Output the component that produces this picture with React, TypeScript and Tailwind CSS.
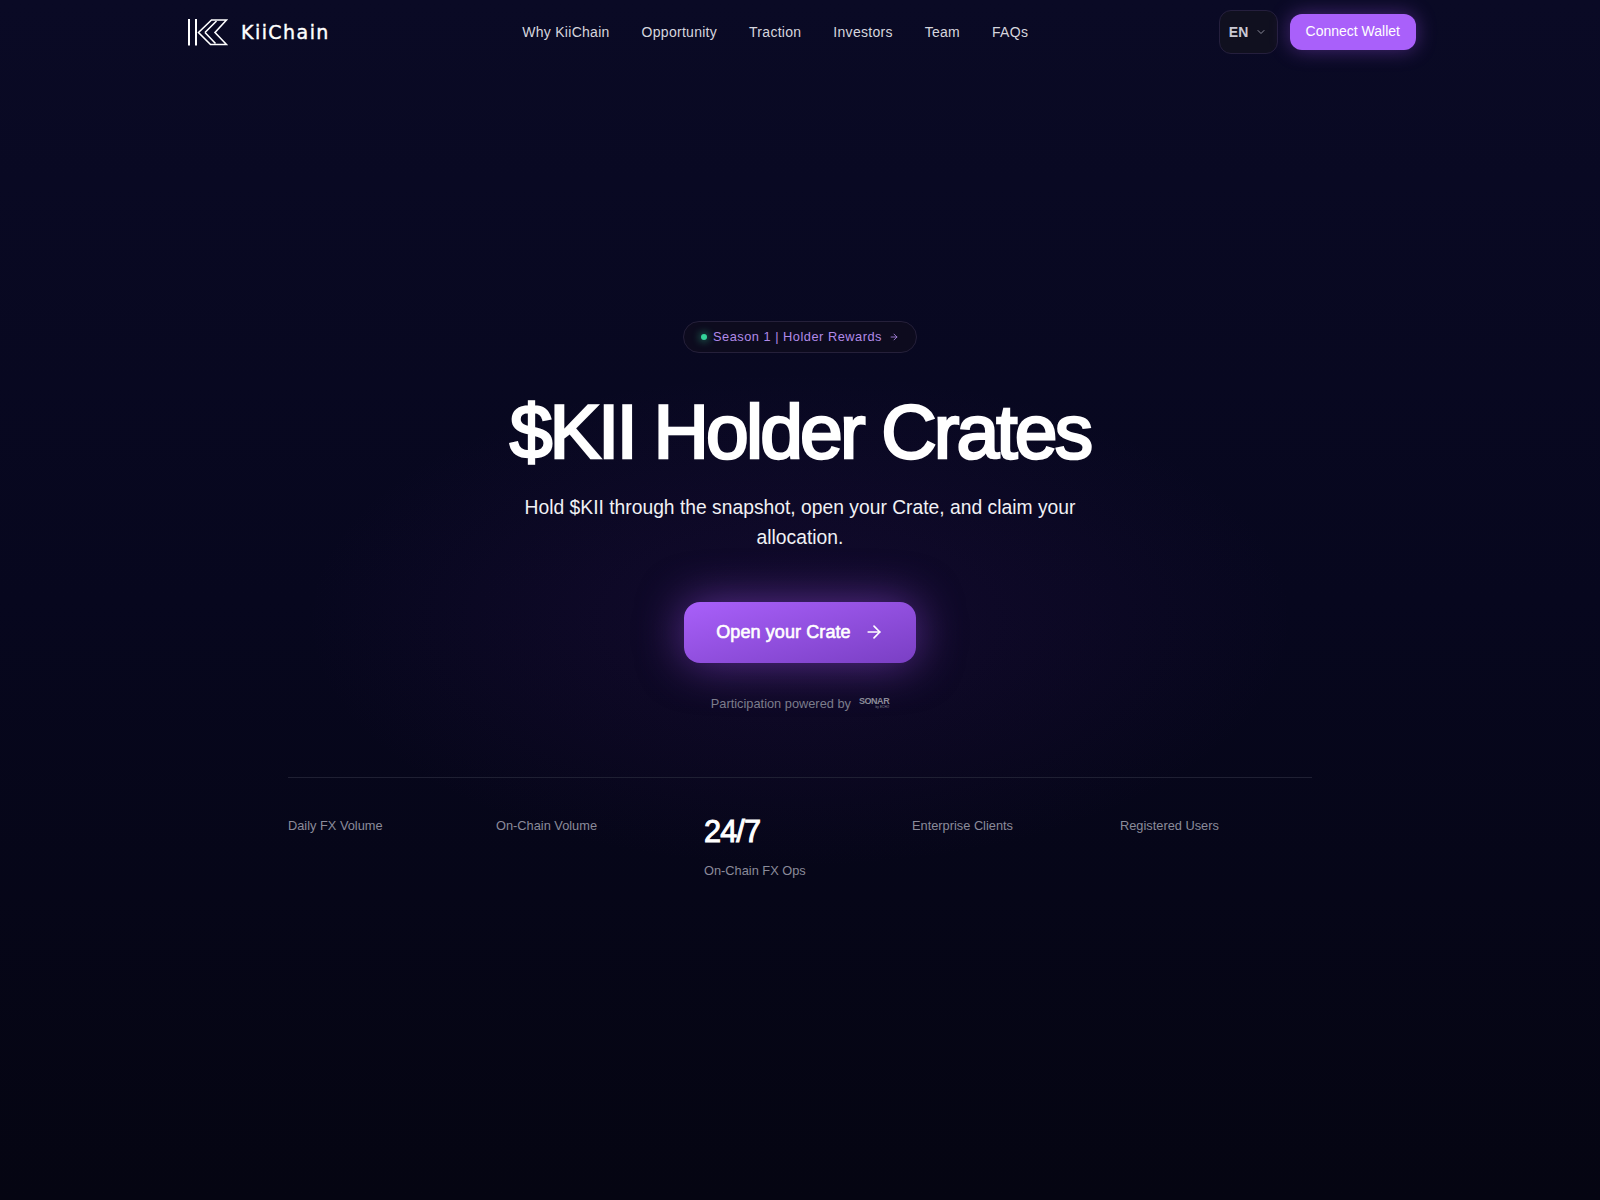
import { ArrowRight, ChevronDown } from "lucide-react";

const links = ["Why KiiChain", "Opportunity", "Traction", "Investors", "Team", "FAQs"];

function Stat({ label, value }: { label: string; value?: string }) {
  return (
    <div>
      {value ? (
        <div className="text-[30.7px] leading-[44px] font-normal tracking-[-0.03em] text-white mb-[7px] [-webkit-text-stroke:1px_white]">{value}</div>
      ) : null}
      <div className={`text-[12.8px] leading-[20px] text-[#8b8b9a] ${value ? "" : "mt-[6px]"}`}>{label}</div>
    </div>
  );
}

export default function App() {
  return (
    <div
      className="relative w-full h-[1200px] overflow-hidden bg-gradient-to-b from-[#0a0a25] via-[#07071e] to-[#050512] text-white"
      style={{ fontFamily: '"Liberation Sans", Arial, sans-serif' }}
    >
      <div className="absolute left-[300px] top-[370px] w-[1000px] h-[500px] bg-[radial-gradient(ellipse_at_center,rgba(88,28,135,0.14),transparent_70%)]" />
      <header className="relative h-[64px] max-w-7xl mx-auto px-6 flex items-center justify-between">
        <div className="flex items-center gap-[13px] pl-[4px]">
          <svg width="40" height="27" viewBox="0 0 40 27" fill="none" stroke="white" strokeWidth="2">
            <path d="M1 0v26.500M8 0v26.500" />
            <path d="M10.500 13.500 23.500 1H38.500L27 13.500 38.500 25.500H22.500L10.500 13.500Z" strokeWidth="1.600" />
            <path d="M17 13.500 28.500 2M17 13.500 27.500 24.500" strokeWidth="1.600" />
          </svg>
          <span className="text-[19px] font-normal tracking-[0.076em] text-white [-webkit-text-stroke:0.4px_white]" style={{ fontFamily: '"DejaVu Sans", sans-serif' }}>KiiChain</span>
        </div>
        <nav className="flex items-center gap-8 text-[14px] tracking-[0.02em] text-[#d6d6de] ml-[2px]">
          {links.map((l) => (
            <a key={l}>{l}</a>
          ))}
        </nav>
        <div className="flex items-center gap-3">
          <div className="h-[44px] w-[59px] rounded-xl border border-[#251f3d] bg-[#10101f] flex items-center justify-center gap-[7px] pl-[2px] pr-[2px] text-[14px] font-bold text-[#c9c9d4]">
            EN <ChevronDown size={12} className="text-[#8b8b9a]" />
          </div>
          <button className="h-[36px] px-4 pb-[1px] rounded-xl bg-[#a960fa] text-[14px] text-white shadow-[0_0_20px_rgba(168,85,247,0.4)]">Connect Wallet</button>
        </div>
      </header>

      <main className="relative flex flex-col items-center pt-[257px]">
        <div className="h-[32px] w-[234px] rounded-full border border-[#25203a] bg-[#0d0b1e] flex items-center justify-center gap-[6px] text-[12.8px] tracking-[0.04em] text-[#b18ae8]">
          <span className="w-[6px] h-[6px] rounded-full bg-[#34d399] shadow-[0_0_8px_#34d399]" />
          <span>Season 1 | Holder Rewards</span>
          <ArrowRight size={10} className="ml-[1px]" />
        </div>
        <h1 className="mt-[34px] text-[76.8px] leading-[88px] font-normal tracking-[-0.037em] text-white [-webkit-text-stroke:2.6px_white]">$KII Holder Crates</h1>
        <p className="mt-[18px] w-[576px] text-center text-[19.3px] leading-[30.2px] text-[#f1f1f5]">
          Hold $KII through the snapshot, open your Crate, and claim your allocation.
        </p>
        <button className="mt-[49px] h-[61px] w-[232px] rounded-2xl bg-gradient-to-br from-[#a960fa] to-[#7a3fc4] flex items-center justify-center gap-[13px] text-[18px] tracking-[0.005em] font-normal text-white [-webkit-text-stroke:0.6px_white] shadow-[0_0_45px_rgba(168,85,247,0.5)]">
          Open your Crate <ArrowRight size={20} className="mb-[1px]" />
        </button>
        <div className="mt-[31px] flex items-center gap-2 text-[12.8px] text-[#7c7c8b]">
          <span>Participation powered by</span>
          <span className="flex flex-col items-end leading-none text-[#8d8d99] mb-[3px]">
            <span className="text-[9px] font-bold tracking-[-0.05em]">SONAR</span>
            <span className="text-[3px] tracking-[0.05em]">by ECHO</span>
          </span>
        </div>
        <div className="mt-[63px] w-[1024px] border-t border-[#1f2033] pt-[32px] grid grid-cols-5 gap-4">
          <Stat label="Daily FX Volume" />
          <Stat label="On-Chain Volume" />
          <Stat label="On-Chain FX Ops" value="24/7" />
          <Stat label="Enterprise Clients" />
          <Stat label="Registered Users" />
        </div>
      </main>
    </div>
  );
}
